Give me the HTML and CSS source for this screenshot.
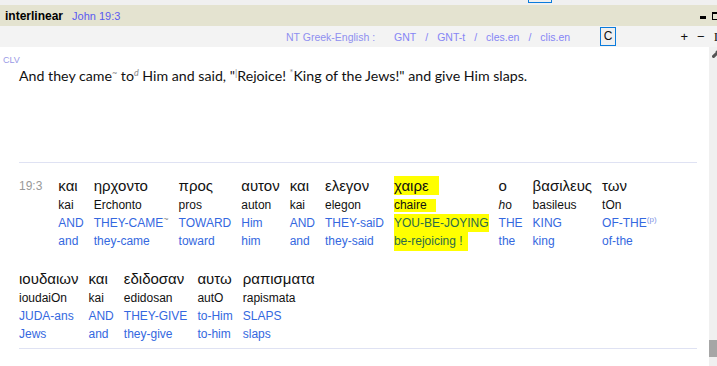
FILE: index.html
```html
<!DOCTYPE html>
<html>
<head>
    <title>interlinear</title>
    <link rel="stylesheet" href="styles.css">
</head>
<body>
    <div class="top-strip"><span class="ghost-box"></span></div>
    <div class="title-bar">
        <span class="title">interlinear</span>
        <span class="ref">John 19:3</span>
        <span class="win-btns">
            <span class="btn-min"></span>
            <span class="btn-max"></span>
        </span>
    </div>
    <div class="toolbar">
        <div class="versions">
            <span class="label">NT Greek-English :</span>
            <span>GNT</span><span>/</span>
            <span>GNT-t</span><span>/</span>
            <span>cles.en</span><span>/</span>
            <span>clis.en</span>
        </div>
        <span class="c-box">C</span>
        <div class="tools">
            <span>+</span>
            <span>&minus;</span>
            <span class="ibeam">I</span>
        </div>
    </div>
    <div class="content">
        <div class="pane">
            <div class="clv">CLV</div>
            <p class="verse">And they came<sup class="mk">~</sup> to<sup class="mk it">d</sup> Him and said, "<sup class="mk">|</sup>Rejoice! <sup class="mk">*</sup>King of the Jews!" and give Him slaps.</p>
            <div class="sep"></div>

            <div class="inter">
                <div class="vnum">19:3</div>
                <div class="col"><span class="gk">και</span><span class="tr">kai</span><span class="up">AND</span><span class="lo">and</span></div>
                <div class="col"><span class="gk">ηρχοντο</span><span class="tr">Erchonto</span><span class="up">THEY-CAME<sup class="mk">~</sup></span><span class="lo">they-came</span></div>
                <div class="col"><span class="gk">προς</span><span class="tr">pros</span><span class="up">TOWARD</span><span class="lo">toward</span></div>
                <div class="col"><span class="gk">αυτον</span><span class="tr">auton</span><span class="up">Him</span><span class="lo">him</span></div>
                <div class="col"><span class="gk">και</span><span class="tr">kai</span><span class="up">AND</span><span class="lo">and</span></div>
                <div class="col"><span class="gk">ελεγον</span><span class="tr">elegon</span><span class="up">THEY-saiD</span><span class="lo">they-said</span></div>
                <div class="col hl"><span class="gk"><i class="mark mark-gk">χαιρε</i></span><span class="tr"><i class="mark mark-tr">chaire</i></span><span class="up"><i class="mark mark-up">YOU-BE-JOYING</i></span><span class="lo"><i class="mark mark-lo">be-rejoicing !</i></span></div>
                <div class="col"><span class="gk">ο</span><span class="tr"><i>h</i>o</span><span class="up">THE</span><span class="lo">the</span></div>
                <div class="col"><span class="gk">βασιλευς</span><span class="tr">basileus</span><span class="up">KING</span><span class="lo">king</span></div>
                <div class="col"><span class="gk">των</span><span class="tr">tOn</span><span class="up">OF-THE<sup class="mk blue">(p)</sup></span><span class="lo">of-the</span></div>
            </div>

            <div class="inter second">
                <div class="col"><span class="gk">ιουδαιων</span><span class="tr">ioudaiOn</span><span class="up">JUDA-ans</span><span class="lo">Jews</span></div>
                <div class="col"><span class="gk">και</span><span class="tr">kai</span><span class="up">AND</span><span class="lo">and</span></div>
                <div class="col"><span class="gk">εδιδοσαν</span><span class="tr">edidosan</span><span class="up">THEY-GIVE</span><span class="lo">they-give</span></div>
                <div class="col"><span class="gk">αυτω</span><span class="tr">autO</span><span class="up">to-Him</span><span class="lo">to-him</span></div>
                <div class="col"><span class="gk">ραπισματα</span><span class="tr">rapismata</span><span class="up">SLAPS</span><span class="lo">slaps</span></div>
            </div>
            <div class="sep last"></div>
        </div>
        <div class="scrollbar">
            <svg class="grip" width="6" height="8" viewBox="0 0 6 8"><path d="M0 7 L5 2 M1 8 L6 3 M4 1 L5 2" stroke="#555" stroke-width="1.6" fill="none"/></svg>
            <div class="thumb"></div>
        </div>
    </div>
</body>
</html>
```

FILE: styles.css
```css
body {
    margin: 0;
    width: 717px;
    height: 366px;
    overflow: hidden;
    background-color: #ffffff;
    font-family: "Liberation Sans", Arial, sans-serif;
}
.top-strip {
    height: 5px;
    background-color: #f0f0f0;
    position: relative;
}
.ghost-box {
    position: absolute;
    left: 528px;
    top: -2px;
    width: 22px;
    height: 3px;
    border: 1px solid #0a7bdc;
}
.title-bar {
    height: 21px;
    background-color: #e4e3d0;
    display: flex;
    align-items: center;
    padding-left: 5px;
}
.title {
    font-weight: bold;
    font-size: 12px;
    color: #000;
}
.ref {
    margin-left: 9px;
    color: #5a5af0;
    font-size: 11px;
}
.win-btns {
    margin-left: auto;
    display: flex;
    align-items: center;
    gap: 6px;
    margin-right: -2px;
}
.btn-min {
    width: 6px;
    height: 3px;
    background: #000;
    margin-top: 4px;
}
.btn-max {
    width: 5px;
    height: 5px;
    border: 1px solid #000;
    border-top-width: 2px;
}
.toolbar {
    height: 21px;
    background-color: #f3f3f3;
    display: flex;
    align-items: center;
    font-size: 10.5px;
}
.versions {
    margin-left: 286px;
    display: flex;
    gap: 9px;
    color: #8585f5;
}
.versions .label {
    color: #8f8ff0;
    margin-right: 10px;
}
.c-box {
    margin-left: 30px;
    width: 14px;
    height: 17px;
    border: 1px solid #0a7bdc;
    background: #f0f0f0;
    font-size: 12px;
    line-height: 17px;
    text-align: center;
    color: #111;
}
.tools {
    margin-left: auto;
    display: flex;
    gap: 9px;
    font-size: 13px;
    color: #111;
    margin-right: -1px;
}
.ibeam {
    font-family: "Liberation Serif", serif;
}
.content {
    display: flex;
    height: 319px;
}
.pane {
    flex: 1;
    padding-right: 12px;
}
.clv {
    padding: 8px 0 0 3px;
    font-size: 9px;
    line-height: 10px;
    color: #9a9ae6;
}
.verse {
    margin: 2px 0 0 19px;
    font-family: Lato, "Open Sans", sans-serif;
    font-size: 14.2px;
    line-height: 18px;
    color: #111;
}
.mk {
    font-size: 9px;
    color: #888;
    vertical-align: 5px;
    line-height: 0;
}
.mk.it {
    font-style: italic;
}
.mk.blue {
    color: #7f95e6;
    font-size: 8px;
}
.sep {
    margin: 77px 0 0 19px;
    height: 1px;
    background-color: #dfe2f3;
}
.sep.last {
    margin-top: 5px;
}
.inter {
    display: flex;
    gap: 10px;
    margin: 13px 0 0 19px;
}
.inter.second {
    margin-top: 18px;
}
.vnum {
    font-size: 12px;
    color: #999;
    line-height: 20px;
    margin-right: 6px;
}
.col {
    display: flex;
    flex-direction: column;
    white-space: nowrap;
}
.gk {
    font-size: 15px;
    line-height: 20px;
    color: #111;
}
.tr {
    font-size: 12px;
    line-height: 18px;
    color: #111;
}
.up, .lo {
    font-size: 12px;
    line-height: 18px;
    color: #3468e0;
}
.mark {
    font-style: normal;
    background-color: #ffff00;
    display: inline-block;
}
.hl .up, .hl .lo {
    color: #2b6b4a;
}
.mark-gk {
    line-height: 19px;
    padding-right: 10px;
}
.mark-tr {
    line-height: 13px;
    padding-right: 9px;
    vertical-align: middle;
}
.mark-up {
    line-height: 18px;
}
.mark-lo {
    line-height: 19px;
    padding-right: 5px;
}
.scrollbar {
    width: 8px;
    background-color: #f0f0f0;
    position: relative;
}
.grip {
    position: absolute;
    left: 3px;
    top: 3px;
}
.thumb {
    position: absolute;
    left: 0;
    right: 0;
    top: 293px;
    height: 17px;
    background-color: #a6a6a6;
}
```
